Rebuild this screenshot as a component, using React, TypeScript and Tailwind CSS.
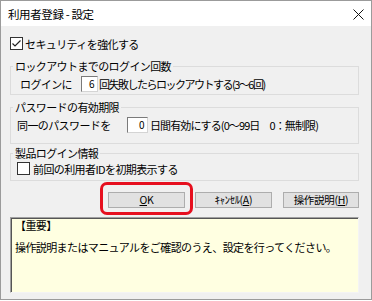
export default function App() {
  return (
    <div className="w-[372px] h-[301px] bg-white font-['Noto_Sans_CJK_JP',sans-serif] text-black">
      <div className="h-[300px] border border-[#9b9b9b] flex flex-col">
        {/* title bar */}
        <div className="h-[25px] bg-white flex items-center justify-between pl-[7px] pr-[7px]">
          <span className="text-[11.5px] leading-[12px] tracking-[-0.4px]">利用者登録 - 設定</span>
          <svg width="11" height="11" viewBox="0 0 11 11" className="mt-[1px]">
            <path d="M0.5 0.5L10.5 10.5M10.5 0.5L0.5 10.5" stroke="#111" strokeWidth="1" fill="none" />
          </svg>
        </div>

        <div className="flex-1 bg-[#f0f0f0] pl-[9px] pr-[12px] text-[11px] leading-[12px] tracking-[-0.6px]">
          <div className="mt-[11px] flex items-center h-[13px]">
            <div className="w-[13px] h-[13px] border border-[#333] bg-white flex items-center justify-center">
              <svg width="11" height="11" viewBox="0 0 11 11">
                <path d="M1.5 5.5L4 8L9.5 2.5" stroke="#222" strokeWidth="1.2" fill="none" />
              </svg>
            </div>
            <span className="ml-[2px]">セキュリティを強化する</span>
          </div>

          <fieldset className="mt-[10px] border border-[#dcdcdc]">
            <legend className="ml-[2px] px-[2px] leading-[12px]">ロックアウトまでのログイン回数</legend>
            <div className="pt-[4px] pb-[2px] pl-[9px] flex items-center">
              <span className="w-[61px]">ログインに</span>
              <div className="w-[17px] h-[16px] bg-white border border-t-[#7a7a7a] border-l-[#7a7a7a] border-r-[#d4d4d4] border-b-[#d4d4d4] text-right pr-[3px] text-[10px] leading-[14px]">6</div>
              <span className="ml-[1px] tracking-[-1.5px]">回失敗したらロックアウトする(3～6回)</span>
            </div>
          </fieldset>

          <fieldset className="mt-[6px] border border-[#dcdcdc]">
            <legend className="ml-[2px] px-[2px] leading-[12px]">パスワードの有効期限</legend>
            <div className="pt-[4px] pb-[10px] pl-[6px] flex items-center">
              <span className="w-[110px]">同一のパスワードを</span>
              <div className="w-[21px] h-[16px] bg-white border border-t-[#7a7a7a] border-l-[#7a7a7a] border-r-[#d4d4d4] border-b-[#d4d4d4] text-right pr-[3px] text-[10px] leading-[14px]">0</div>
              <span className="ml-[2px] tracking-[-0.9px]">日間有効にする(0～99日　0：無制限)</span>
            </div>
          </fieldset>

          <fieldset className="mt-[3px] border border-[#dcdcdc]">
            <legend className="ml-[2px] px-[2px] leading-[12px]">製品ログイン情報</legend>
            <div className="pt-[3px] pb-[5px] pl-[6px] flex items-center">
              <div className="w-[13px] h-[13px] border border-[#333] bg-white" />
              <span className="ml-[3px]">前回の利用者IDを初期表示する</span>
            </div>
          </fieldset>

          <div className="mt-[11px] flex justify-end text-[10.5px] tracking-[-0.3px]">
            <div className="relative">
              <button className="w-[77px] h-[16px] bg-[#e1e1e1] border border-[#adadad] flex items-center justify-center leading-[12px]">
                <span><span className="underline">O</span>K</span>
              </button>
              <div className="absolute left-[-8px] top-[-10px] w-[93px] h-[33px] border-[3px] border-[#e60f1e] rounded-[7px]" />
            </div>
            <button className="ml-[10px] w-[77px] h-[16px] bg-[#e1e1e1] border border-[#adadad] flex items-center justify-center leading-[12px]">
              <span>ｷｬﾝｾﾙ(<span className="underline">A</span>)</span>
            </button>
            <button className="ml-[11px] w-[76px] h-[16px] bg-[#e1e1e1] border border-[#adadad] flex items-center justify-center leading-[12px]">
              <span>操作説明(<span className="underline">H</span>)</span>
            </button>
          </div>

          <div className="mt-[9px] h-[76px] bg-[#ffffe1] border border-t-[#a0a0a0] border-l-[#a0a0a0] border-r-[#f4f4f4] border-b-[#f4f4f4] shadow-[inset_1px_1px_0_#555] pl-[4px]">
            <div className="mt-[1px]">【重要】</div>
            <div className="mt-[10px]">操作説明またはマニュアルをご確認のうえ、設定を行ってください。</div>
          </div>
        </div>
      </div>
    </div>
  );
}
